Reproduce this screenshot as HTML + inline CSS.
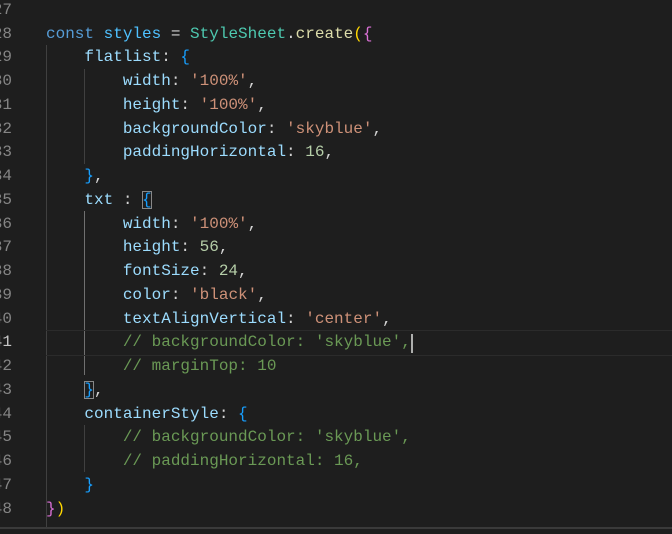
<!DOCTYPE html>
<html><head><meta charset="utf-8"><style>
html,body{margin:0;padding:0;background:#1e1e1e;width:672px;height:532px;overflow:hidden}
.wrap{position:absolute;left:0;top:1.5px;width:672px;height:532px}
.l{position:absolute;left:0;height:23.75px;line-height:23.75px;font-family:"Liberation Mono",monospace;font-size:16px;white-space:pre;color:#d4d4d4}
.n{position:absolute;right:660px;text-align:right;color:#858585;font-family:"Liberation Mono",monospace;font-size:16px;line-height:23.75px;height:23.75px}
.c{position:absolute;left:46px}
.k{color:#569cd6}.v{color:#4fc1ff}.t{color:#4ec9b0}.f{color:#dcdcaa}.g{color:#ffd700}.p{color:#da70d6}.b{color:#179fff}
.pr{color:#9cdcfe}.s{color:#ce9178}.num{color:#b5cea8}.cm{color:#6a9955}
.guide{position:absolute;width:1px;background:#404040}
.bx{outline:1px solid #888;outline-offset:-1px}
</style></head><body>
<div class="guide" style="left:46px;top:45px;height:482px"></div>
<div class="guide" style="left:84px;top:69px;height:95px"></div>
<div class="guide" style="left:84px;top:211px;height:164px;background:#707070"></div>
<div class="guide" style="left:84px;top:425px;height:47px"></div>
<div style="position:absolute;left:46px;right:0;top:330px;height:24px;border-top:1px solid #2b2b2b;border-bottom:1px solid #2b2b2b"></div>
<div style="position:absolute;left:0;right:0;top:527px;height:2px;background:#3a3a3a"></div>
<div class="wrap">
<div class="n" style="top:-2.6px">27</div>
<div class="n" style="top:21.15px">28</div>
<div class="n" style="top:44.9px">29</div>
<div class="n" style="top:68.65px">30</div>
<div class="n" style="top:92.4px">31</div>
<div class="n" style="top:116.15px">32</div>
<div class="n" style="top:139.9px">33</div>
<div class="n" style="top:163.65px">34</div>
<div class="n" style="top:187.4px">35</div>
<div class="n" style="top:211.15px">36</div>
<div class="n" style="top:234.9px">37</div>
<div class="n" style="top:258.65px">38</div>
<div class="n" style="top:282.4px">39</div>
<div class="n" style="top:306.15px">40</div>
<div class="n" style="top:329.9px;color:#c6c6c6">41</div>
<div class="n" style="top:353.65px">42</div>
<div class="n" style="top:377.4px">43</div>
<div class="n" style="top:401.15px">44</div>
<div class="n" style="top:424.9px">45</div>
<div class="n" style="top:448.65px">46</div>
<div class="n" style="top:472.4px">47</div>
<div class="n" style="top:496.15px">48</div>

<div class="l c" style="top:21.15px"><span class="k">const</span> <span class="v">styles</span> = <span class="t">StyleSheet</span>.<span class="f">create</span><span class="g">(</span><span class="p">{</span></div>
<div class="l c" style="top:44.9px">    <span class="pr">flatlist</span>: <span class="b">{</span></div>
<div class="l c" style="top:68.65px">        <span class="pr">width</span>: <span class="s">'100%'</span>,</div>
<div class="l c" style="top:92.4px">        <span class="pr">height</span>: <span class="s">'100%'</span>,</div>
<div class="l c" style="top:116.15px">        <span class="pr">backgroundColor</span>: <span class="s">'skyblue'</span>,</div>
<div class="l c" style="top:139.9px">        <span class="pr">paddingHorizontal</span>: <span class="num">16</span>,</div>
<div class="l c" style="top:163.65px">    <span class="b">}</span>,</div>
<div class="l c" style="top:187.4px">    <span class="pr">txt</span> : <span class="b bx">{</span></div>
<div class="l c" style="top:211.15px">        <span class="pr">width</span>: <span class="s">'100%'</span>,</div>
<div class="l c" style="top:234.9px">        <span class="pr">height</span>: <span class="num">56</span>,</div>
<div class="l c" style="top:258.65px">        <span class="pr">fontSize</span>: <span class="num">24</span>,</div>
<div class="l c" style="top:282.4px">        <span class="pr">color</span>: <span class="s">'black'</span>,</div>
<div class="l c" style="top:306.15px">        <span class="pr">textAlignVertical</span>: <span class="s">'center'</span>,</div>
<div class="l c" style="top:329.9px">        <span class="cm">// backgroundColor: 'skyblue',</span></div>
<div style="position:absolute;left:411px;top:332px;width:2px;height:19px;background:#aeafad"></div>
<div class="l c" style="top:353.65px">        <span class="cm">// marginTop: 10</span></div>
<div class="l c" style="top:377.4px">    <span class="b bx">}</span>,</div>
<div class="l c" style="top:401.15px">    <span class="pr">containerStyle</span>: <span class="b">{</span></div>
<div class="l c" style="top:424.9px">        <span class="cm">// backgroundColor: 'skyblue',</span></div>
<div class="l c" style="top:448.65px">        <span class="cm">// paddingHorizontal: 16,</span></div>
<div class="l c" style="top:472.4px">    <span class="b">}</span></div>
<div class="l c" style="top:496.15px"><span class="p">}</span><span class="g">)</span></div>
</div>
</body></html>
